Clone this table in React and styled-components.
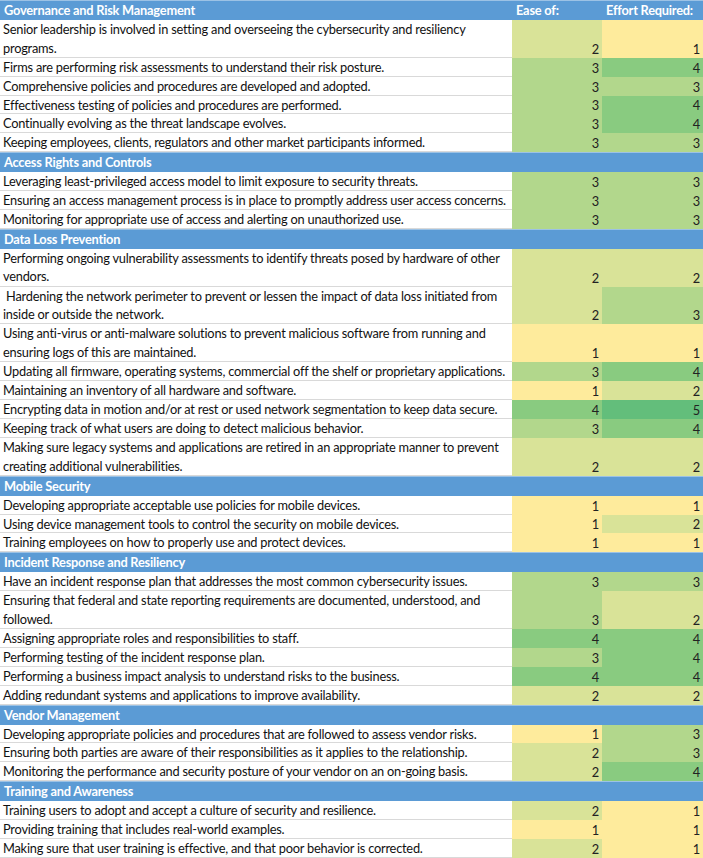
import React from 'react'
import styled, { createGlobalStyle } from 'styled-components'

const GlobalStyle = createGlobalStyle`
  html, body {
    margin: 0;
    padding: 0;
    background: #ffffff;
  }
  body {
    font-family: Lato, "Liberation Sans", Arial, sans-serif;
  }
`;

const scaleColors = {
  1: '#feeb9c',
  2: '#d9e398',
  3: '#b2d78c',
  4: '#89cb80',
  5: '#63be7b',
};

const sections = [
  {
    title: 'Governance and Risk Management',
    rows: [
      ['Senior leadership is involved in setting and overseeing the cybersecurity and resiliency programs.', 2, 1, 2],
      ['Firms are performing risk assessments to understand their risk posture.', 3, 4],
      ['Comprehensive policies and procedures are developed and adopted.', 3, 3],
      ['Effectiveness testing of policies and procedures are performed.', 3, 4],
      ['Continually evolving as the threat landscape evolves.', 3, 4],
      ['Keeping employees, clients, regulators and other market participants informed.', 3, 3],
    ],
  },
  {
    title: 'Access Rights and Controls',
    rows: [
      ['Leveraging least-privileged access model to limit exposure to security threats.', 3, 3],
      ['Ensuring an access management process is in place to promptly address user access concerns.', 3, 3],
      ['Monitoring for appropriate use of access and alerting on unauthorized use.', 3, 3],
    ],
  },
  {
    title: 'Data Loss Prevention',
    rows: [
      ['Performing ongoing vulnerability assessments to identify threats posed by hardware of other vendors.', 2, 2, 2],
      ['\u00a0Hardening the network perimeter to prevent or lessen the impact of data loss initiated from inside or outside the network.', 2, 3, 2],
      ['Using anti-virus or anti-malware solutions to prevent malicious software from running and ensuring logs of this are maintained.', 1, 1, 2],
      ['Updating all firmware, operating systems, commercial off the shelf or proprietary applications.', 3, 4],
      ['Maintaining an inventory of all hardware and software.', 1, 2],
      ['Encrypting data in motion and/or at rest or used network segmentation to keep data secure.', 4, 5],
      ['Keeping track of what users are doing to detect malicious behavior.', 3, 4],
      ['Making sure legacy systems and applications are retired in an appropriate manner to prevent creating additional vulnerabilities.', 2, 2, 2],
    ],
  },
  {
    title: 'Mobile Security',
    rows: [
      ['Developing appropriate acceptable use policies for mobile devices.', 1, 1],
      ['Using device management tools to control the security on mobile devices.', 1, 2],
      ['Training employees on how to properly use and protect devices.', 1, 1],
    ],
  },
  {
    title: 'Incident Response and Resiliency',
    rows: [
      ['Have an incident response plan that addresses the most common cybersecurity issues.', 3, 3],
      ['Ensuring that federal and state reporting requirements are documented, understood, and followed.', 3, 2, 2],
      ['Assigning appropriate roles and responsibilities to staff.', 4, 4],
      ['Performing testing of the incident response plan.', 3, 4],
      ['Performing a business impact analysis to understand risks to the business.', 4, 4],
      ['Adding redundant systems and applications to improve availability.', 2, 2],
    ],
  },
  {
    title: 'Vendor Management',
    rows: [
      ['Developing appropriate policies and procedures that are followed to assess vendor risks.', 1, 3],
      ['Ensuring both parties are aware of their responsibilities as it applies to the relationship.', 2, 3],
      ['Monitoring the performance and security posture of your vendor on an on-going basis.', 2, 4],
    ],
  },
  {
    title: 'Training and Awareness',
    rows: [
      ['Training users to adopt and accept a culture of security and resilience.', 2, 1],
      ['Providing training that includes real-world examples.', 1, 1],
      ['Making sure that user training is effective, and that poor behavior is corrected.', 2, 1],
    ],
  },
];

const Sheet = styled.div`
  width: 703px;
  height: 858px;
  display: flex;
  flex-direction: column;
  overflow: hidden;
  font-size: 12.8px;
  letter-spacing: -0.22px;
`;

const Row = styled.div`
  flex: ${p => p.$lines} 1 0;
  display: grid;
  grid-template-columns: 512px 90px 1fr;
  min-height: 0;
`;

const HeaderRow = styled(Row)`
  background: #5b9bd5;
  border-top: 1px solid #9cc2e5;
  color: #ffffff;
  font-weight: 700;
  align-items: center;
`;

const HeaderCell = styled.div`
  padding-left: ${p => p.$pad ?? 4}px;
  white-space: nowrap;
  line-height: 17px;
`;

const Label = styled.div`
  padding: 0 4px 0 3px;
  line-height: 18.6px;
  color: #111;
  border-bottom: 1px solid #d9d9d9;
  overflow: hidden;
`;

const Score = styled.div`
  background: ${p => scaleColors[p.$value]};
  display: flex;
  align-items: flex-end;
  justify-content: flex-end;
  padding-right: 3px;
  line-height: 18px;
  color: #222;
`;

const Section = ({ title, rows, first }) => (
  <>
    <HeaderRow $lines={1}>
      <HeaderCell>{title}</HeaderCell>
      <HeaderCell $pad={4}>{first ? 'Ease of:' : ''}</HeaderCell>
      <HeaderCell $pad={4}>{first ? 'Effort Required:' : ''}</HeaderCell>
    </HeaderRow>
    {rows.map(([text, ease, effort, lines = 1]) => (
      <Row key={text} $lines={lines}>
        <Label>{text}</Label>
        <Score $value={ease}>{ease}</Score>
        <Score $value={effort}>{effort}</Score>
      </Row>
    ))}
  </>
);

const App = () => (
  <>
    <GlobalStyle />
    <Sheet>
      {sections.map((s, i) => (
        <Section key={s.title} title={s.title} rows={s.rows} first={i === 0} />
      ))}
    </Sheet>
  </>
);

export default App
